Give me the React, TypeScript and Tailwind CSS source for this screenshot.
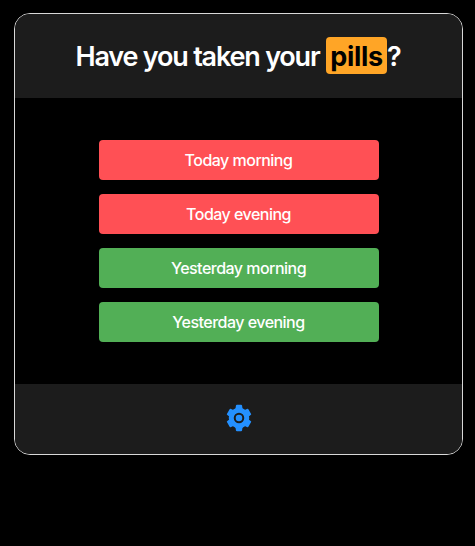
const doses = [
  { label: "Today morning", taken: false },
  { label: "Today evening", taken: false },
  { label: "Yesterday morning", taken: true },
  { label: "Yesterday evening", taken: true },
];

export default function App() {
  return (
    <div className="h-[546px] bg-black px-3.5 pt-[13px] font-['Inter',sans-serif] text-white">
      <main className="flex h-[442px] w-[449px] flex-col overflow-hidden rounded-2xl border border-[#d8d8d8]">
        <header className="flex h-[84px] items-center justify-center bg-[#1c1c1c] pr-px pb-px">
          <h1 className="flex items-center text-[27px] leading-[37px] font-semibold tracking-[-1.2px] whitespace-pre">
            <span className="pt-px">Have you taken your </span>
            <mark className="mb-px ml-px flex h-[37px] w-[61px] items-center justify-center rounded bg-[#ffa526] pt-[3px] text-[27px] font-bold tracking-[-0.3px] text-black">
              pills
            </mark>
            <span className="pt-px">?</span>
          </h1>
        </header>
        <section className="flex flex-1 flex-col items-center justify-center gap-3.5">
          {doses.map((dose) => (
            <button
              key={dose.label}
              className={`h-10 w-[280px] rounded text-[16px] font-medium tracking-[-0.52px] ${dose.taken ? "bg-[#52af56]" : "bg-[#ff5055]"}`}
            >
              {dose.label}
            </button>
          ))}
        </section>
        <footer className="flex h-[70px] items-center justify-center bg-[#1c1c1c] pb-0.5">
          <svg viewBox="0 0 24 24" className="size-8 text-[#2490ff]" fill="currentColor">
            <path d="M19.14 12.94c.04-.3.06-.61.06-.94s-.02-.64-.07-.94l1.83-1.48a.49.49 0 0 0 .12-.61l-2.02-3.52a.7.7 0 0 0-.79-.3l-1.99.84a7 7 0 0 0-1.62-.94l-.36-2.44a.8.8 0 0 0-.78-.51h-3.04a.8.8 0 0 0-.77.51l-.36 2.44c-.59.24-1.13.57-1.62.94l-1.99-.84a.7.7 0 0 0-.79.3L2.93 8.97a.48.48 0 0 0 .12.61l1.84 1.48a6 6 0 0 0 0 1.88l-1.84 1.48a.49.49 0 0 0-.12.61l2.02 3.52c.15.26.47.4.79.3l1.99-.84c.5.38 1.03.7 1.62.94l.36 2.44c.05.3.4.51.78.51h3.04c.35 0 .7-.21.77-.51l.36-2.44c.59-.24 1.13-.56 1.62-.94l1.99.84c.3.1.64 0 .79-.3l2.02-3.52a.48.48 0 0 0-.12-.61z" />
            <circle cx="12" cy="12" r="7.7" />
            <circle cx="12" cy="12" r="3.2" fill="none" stroke="#1c1c1c" strokeWidth="1.5" />
          </svg>
        </footer>
      </main>
    </div>
  );
}
